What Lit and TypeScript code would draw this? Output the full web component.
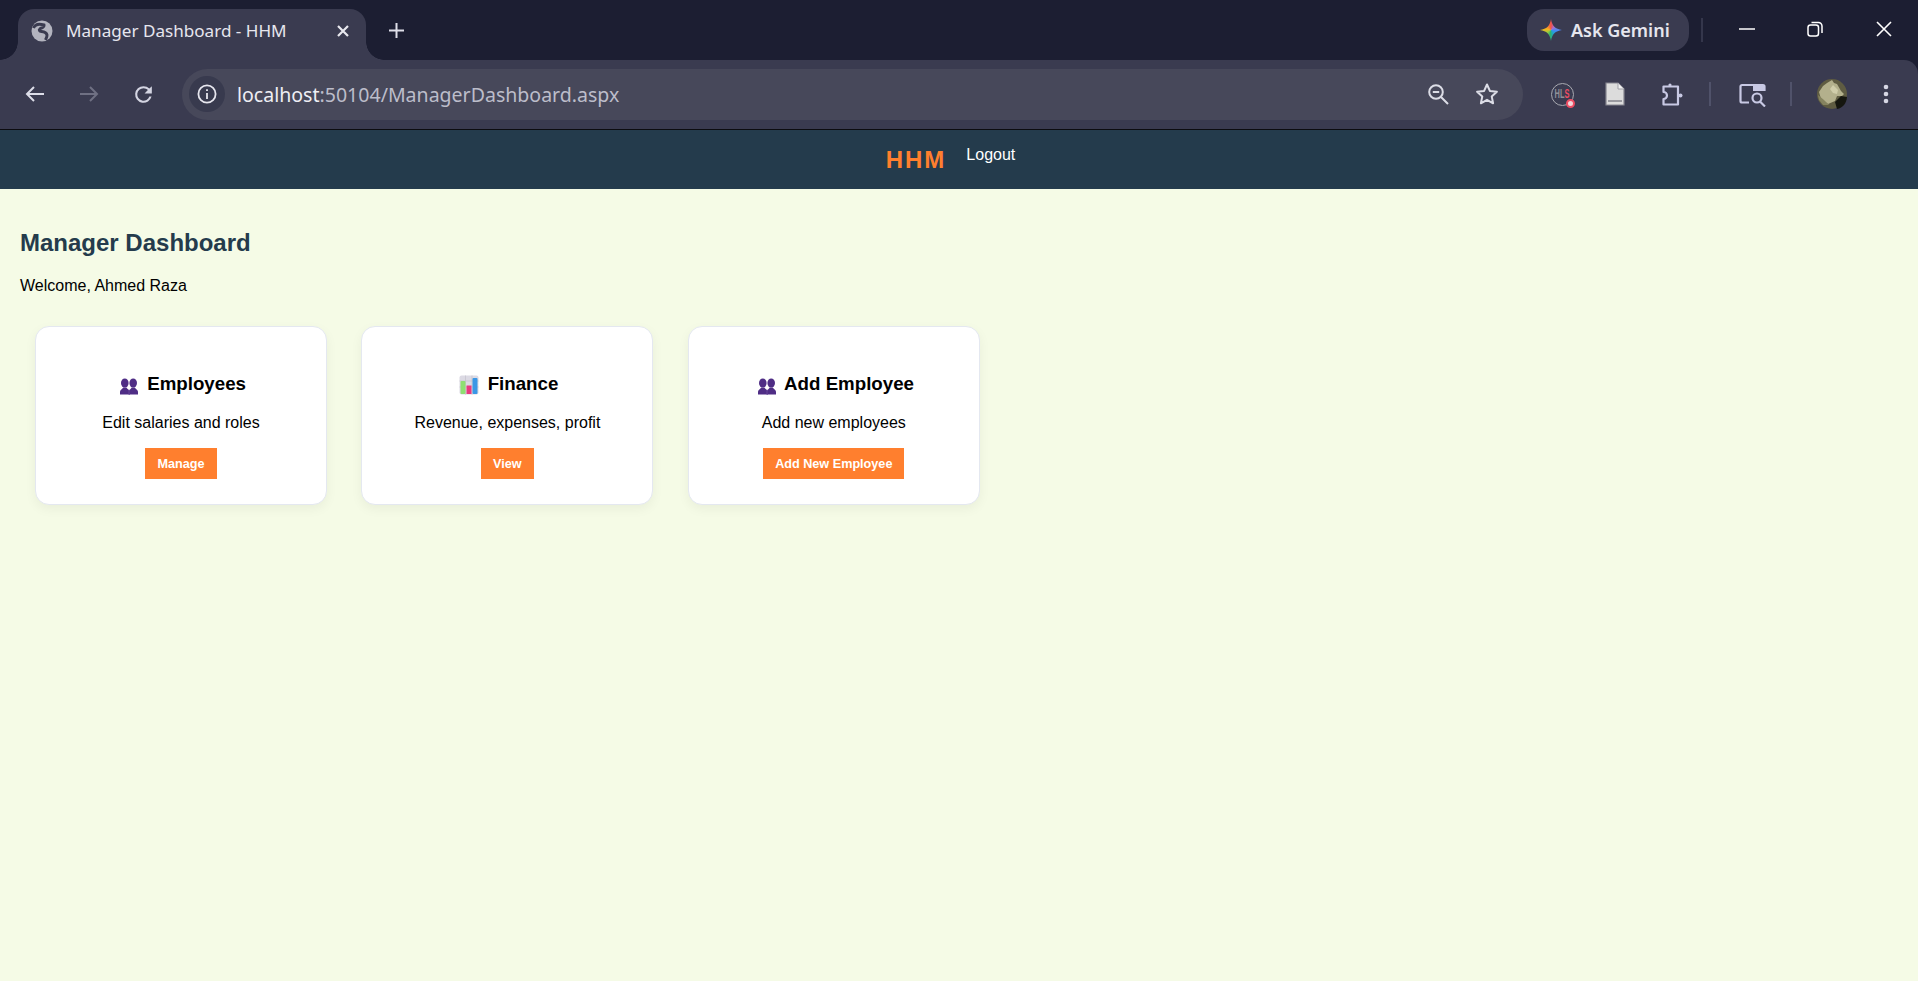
// app.ts — browser chrome plus the HHM manager dashboard page
import { LitElement, html, css, svg } from 'lit';
import { customElement } from 'lit/decorators.js';

const people = svg`
  <g fill="#4f2d85">
    <ellipse cx="8.800" cy="8" rx="3.800" ry="4.500"></ellipse>
    <path d="M4 19.500v-2.800c0-2 2.600-2.500 3.200-4.200h3.200c.6 1.700 3.200 2.200 3.600 4.200v2.800z"></path>
    <ellipse cx="17.200" cy="8" rx="3.800" ry="4.500"></ellipse>
    <path d="M12.600 19.500v-2.800c0-2 2.800-2.500 3-4.200h3.200c.6 1.700 3.200 2.200 3.200 4.200v2.800z"></path>
  </g>
  <path d="M13 14.500v5" stroke="#7a5aa8" stroke-width=".6"></path>`;

const chart = svg`
  <rect x="3.500" y="0.500" width="19" height="19" rx="2" fill="#dcdae4"></rect>
  <path d="M3.500 6h19M3.500 12h19M9.500 .5v19M16 .5v19" stroke="#c3c1cc" stroke-width=".7"></path>
  <rect x="4.500" y="6" width="5" height="13" rx="1" fill="#8fdf72"></rect>
  <rect x="10.500" y="10.500" width="5" height="8.500" fill="#e9397f"></rect>
  <rect x="16.500" y="3" width="5" height="16" rx="1" fill="#3a97e6"></rect>`;

const cards = [
  { icon: people, title: 'Employees', text: 'Edit salaries and roles', action: 'Manage' },
  { icon: chart, title: 'Finance', text: 'Revenue, expenses, profit', action: 'View' },
  { icon: people, title: 'Add Employee', text: 'Add new employees', action: 'Add New Employee' },
];

@customElement('app-root')
export class AppRoot extends LitElement {
  static styles = css`
    :host {
      display: flex;
      flex-direction: column;
      height: 100vh;
      background: #1c1e32;
      font-family: 'Liberation Sans', Arial, sans-serif;
      overflow: hidden;
    }
    svg { display: block; }

    /* ── window strip ─────────────────────────── */
    .strip {
      display: flex;
      flex: none;
      height: 60px;
      font-family: 'Noto Sans', sans-serif;
    }
    .tab {
      position: relative;
      display: flex;
      align-items: center;
      box-sizing: border-box;
      width: 348px;
      height: 51px;
      margin: 9px 0 0 18px;
      padding: 0 16px 8px 13px;
      background: #3a3b50;
      border-radius: 16px 16px 0 0;
      color: #e6e6ee;
      font-size: 17.100px;
    }
    .tab::before,
    .tab::after {
      content: '';
      position: absolute;
      bottom: 0;
      width: 18px;
      height: 18px;
    }
    .tab::before {
      left: -18px;
      background: radial-gradient(circle at 0 0, transparent 17.500px, #3a3b50 18px);
    }
    .tab::after {
      right: -18px;
      background: radial-gradient(circle at 100% 0, transparent 17.500px, #3a3b50 18px);
    }
    .tab-title { margin-left: 13px; flex: 1; white-space: nowrap; }
    .new-tab { width: 40px; margin: 12px 0 0 10px; display: flex; justify-content: center; padding-top: 10px; box-sizing: border-box; }
    .spacer { flex: 1; }
    .gemini {
      display: flex;
      align-items: center;
      box-sizing: border-box;
      width: 162px;
      height: 42px;
      margin-top: 9px;
      padding-left: 13px;
      background: #3a3b50;
      border-radius: 17px;
      color: #e6e6ee;
      font-size: 18px;
      font-weight: 600;
    }
    .spark {
      width: 22px;
      height: 22px;
      margin-right: 9px;
      background: conic-gradient(#f0514a 0deg, #a56fd0 45deg, #3f8cf5 100deg, #1fa5c8 150deg, #2fb26a 190deg, #9ccb3f 240deg, #f6b51e 280deg, #f0514a 360deg);
      clip-path: path('M11 0C11.800 6.500 15.500 10.200 22 11C15.500 11.800 11.800 15.500 11 22C10.200 15.500 6.500 11.800 0 11C6.500 10.200 10.200 6.500 11 0Z');
    }
    .strip-sep { width: 2px; height: 24px; margin: 18px 0 0 12px; background: #34364b; }
    .win { display: flex; margin-top: 21px; }
    .win-btn { display: flex; justify-content: center; width: 68px; }
    .win-btn svg { height: 16px; width: 16px; }
    .win-first { margin-left: 10px; }
    .win-last { margin-left: 1px; }

    /* ── toolbar ──────────────────────────────── */
    .toolbar {
      display: flex;
      align-items: center;
      flex: none;
      box-sizing: border-box;
      height: 70px;
      padding: 0 0 1px 8px;
      background: #3a3b50;
      border-bottom: 1px solid #0c0c10;
      border-top-right-radius: 14px;
    }
    .nav-btn { display: flex; justify-content: center; width: 54px; }
    .omnibox {
      display: flex;
      align-items: center;
      box-sizing: border-box;
      width: 1341px;
      height: 51px;
      margin-left: 12px;
      padding: 0 18px 0 7px;
      background: #47485a;
      border-radius: 26px;
      font-family: 'Noto Sans', sans-serif;
      font-size: 19.550px;
      color: #bcbdca;
    }
    .chip {
      display: flex;
      align-items: center;
      justify-content: center;
      flex: none;
      width: 36px;
      height: 36px;
      border-radius: 50%;
      background: #383a4e;
    }
    .url { flex: 1; margin-left: 12px; white-space: nowrap; }
    .url b { font-weight: 400; color: #eeeef4; }
    .omni-btn { display: flex; justify-content: center; width: 36px; }
    .omni-btn + .omni-btn { margin-left: 13px; }
    .tool { display: flex; justify-content: center; flex: none; width: 52px; }
    .hls { margin-left: 13px; position: relative; }
    .doc { margin-left: 1px; }
    .puzzle { margin-left: 4px; }
    .tool-sep { flex: none; width: 2px; height: 24px; margin-left: 12px; background: #50526a; }
    .lens { margin-left: 15px; }
    .face { margin-left: 14px; }
    .menu { margin-left: 2px; }
    .hls-ring {
      position: relative;
      display: flex;
      align-items: center;
      justify-content: center;
      box-sizing: border-box;
      width: 23px;
      height: 23px;
      border: 1.500px solid #a8a9b0;
      border-radius: 50%;
      color: #8f9098;
    }
    .hls-text {
      display: inline-block;
      font: bold 12px/1 'Liberation Sans', sans-serif;
      transform: scaleX(.62);
    }
    .hls-text i { font-style: normal; color: #ee4d63; }
    .hls-ring::after {
      content: '';
      position: absolute;
      right: -2px;
      bottom: -3px;
      width: 5px;
      height: 5px;
      border: 2.500px solid #ee4d63;
      border-radius: 50%;
      background: #f3d6da;
    }

    /* ── page ─────────────────────────────────── */
    .bar {
      display: flex;
      align-items: center;
      justify-content: center;
      flex: none;
      height: 59px;
      background: #243b4c;
    }
    .brand {
      font-size: 24px;
      font-weight: 700;
      letter-spacing: 2px;
      color: #ff7f2e;
    }
    .logout {
      margin: 0 0 10px 4px;
      padding: 0 17px 0 16px;
      color: #fff;
      font-size: 16px;
    }
    main { flex: 1; padding: 20px; background: #f5fbe6; color: #000; font-size: 16px; }
    h2 {
      margin: 19.920px 0;
      font-size: 24px;
      color: #243b4c;
    }
    .welcome { margin: 16px 0; }
    .cards { display: flex; gap: 34.400px; margin: 31px 0 0 15px; }
    .card {
      box-sizing: border-box;
      width: 292px;
      height: 179px;
      padding: 26px 24px 24px;
      background: #fff;
      border: 1px solid #e4e8f0;
      border-radius: 14px;
      box-shadow: 0 4px 12px rgba(0, 0, 0, 0.05);
      text-align: center;
    }
    h3 {
      margin: 18.720px 0 19.700px;
      font-size: 18.720px;
      line-height: 23px;
      white-space: nowrap;
    }
    h3 svg {
      display: inline-block;
      vertical-align: -5px;
    }
    .card p { margin: 0 0 16px; line-height: 18px; }
    button {
      display: inline-block;
      height: 31px;
      padding: 0 12px;
      border: 0;
      background: #ff7f2e;
      color: #fff;
      font: bold 12.650px 'Liberation Sans', Arial, sans-serif;
    }
  `;

  render() {
    return html`
      <div class="strip">
        <div class="tab">
          <svg width="22" height="22" viewBox="0 0 22 22">
            <circle cx="11" cy="11" r="10.500" fill="#b3b4bf"></circle>
            <path d="M2.500 8C4 4.500 8 3.500 13 5c.5 2-2.500 2.800-4 3.800-1.500 1.200-.5 2.500 1.500 2.700 3.500.3 5 1.200 5.500 3.500.2 1.500-.5 3-1.500 5" fill="none" stroke="#3a3b50" stroke-width="3"></path>
          </svg>
          <span class="tab-title">Manager Dashboard - HHM</span>
          <svg width="14" height="14" viewBox="0 0 14 14" stroke="#e8e8ef" stroke-width="2.200"><path d="M2 2l10 10M12 2 2 12"></path></svg>
        </div>
        <div class="new-tab">
          <svg width="17" height="17" viewBox="0 0 17 17" stroke="#dedee8" stroke-width="2"><path d="M8.500 1v15M1 8.500h15"></path></svg>
        </div>
        <div class="spacer"></div>
        <div class="gemini"><span class="spark"></span>Ask Gemini</div>
        <div class="strip-sep"></div>
        <div class="win">
          <div class="win-btn win-first">
            <svg viewBox="0 0 16 16" stroke="#fff" stroke-width="1.500"><path d="M0 8h16"></path></svg>
          </div>
          <div class="win-btn">
            <svg viewBox="0 0 16 16" fill="none" stroke="#fff" stroke-width="1.500"><rect x="1" y="4" width="10.500" height="11" rx="2.500"></rect><path d="M4.500 1.500h7a3.500 3.500 0 0 1 3.500 3.500v7"></path></svg>
          </div>
          <div class="win-btn win-last">
            <svg viewBox="0 0 16 16" stroke="#fff" stroke-width="1.600"><path d="M1 1l14 14M15 1 1 15"></path></svg>
          </div>
        </div>
      </div>

      <div class="toolbar">
        <div class="nav-btn">
          <svg width="24" height="24" viewBox="0 0 24 24" fill="none" stroke="#dcdde8" stroke-width="2"><path d="M21 12H4M11 5l-7 7 7 7"></path></svg>
        </div>
        <div class="nav-btn">
          <svg width="24" height="24" viewBox="0 0 24 24" fill="none" stroke="#6f7083" stroke-width="2"><path d="M3 12h17M13 5l7 7-7 7"></path></svg>
        </div>
        <div class="nav-btn">
          <svg width="25" height="25" viewBox="0 0 24 24" fill="#d4d5e2"><path d="M17.650 6.350A7.950 7.950 0 0 0 12 4a8 8 0 1 0 7.730 10h-2.080A6 6 0 1 1 12 6c1.660 0 3.140.690 4.220 1.780L13 11h7V4l-2.350 2.350z"></path></svg>
        </div>
        <div class="omnibox">
          <div class="chip">
            <svg width="22" height="22" viewBox="0 0 22 22" fill="none" stroke="#e6e6ee" stroke-width="1.800">
              <circle cx="11" cy="11" r="8.600"></circle>
              <path d="M11 10v6M11 6.200v1.800"></path>
            </svg>
          </div>
          <span class="url"><b>localhost</b>:50104/ManagerDashboard.aspx</span>
          <div class="omni-btn">
            <svg width="24" height="24" viewBox="0 0 24 24" fill="none" stroke="#dcdde6" stroke-width="2"><circle cx="10" cy="10" r="6.800"></circle><path d="M6.800 10h6.400M15 15l7 7"></path></svg>
          </div>
          <div class="omni-btn">
            <svg width="24" height="24" viewBox="0 0 24 24" fill="none" stroke="#dcdde6" stroke-width="2" stroke-linejoin="round"><path d="M12 2.500l2.900 6.400 7 .8-5.200 4.700 1.400 6.900-6.100-3.500-6.100 3.500 1.400-6.900L2.100 9.700l7-.8z"></path></svg>
          </div>
        </div>
        <div class="tool hls"><div class="hls-ring"><span class="hls-text">HL<i>S</i></span></div></div>
        <div class="tool doc">
          <svg width="20" height="24" viewBox="0 0 20 24">
            <path d="M1 1h12l6 6v16H1z" fill="#dcdcdc" stroke="#85858f" stroke-width="1.200"></path>
            <path d="M13 1v6h6" fill="#f2f2f2" stroke="#a0a0a8"></path>
            <rect x="3" y="18" width="14" height="2" fill="#9a9aa0"></rect>
          </svg>
        </div>
        <div class="tool puzzle">
          <svg width="25" height="25" viewBox="0 0 25 25" fill="none" stroke="#c8c9e4" stroke-width="2.200" stroke-linejoin="round">
            <path d="M4.500 4.500h14.500v18H4.500v-5.500a3.500 3.500 0 0 0 0-7z"></path>
            <circle cx="11" cy="3" r="1.600" fill="#c8c9e4" stroke="none"></circle>
            <circle cx="21.500" cy="13.500" r="2" fill="#c8c9e4" stroke="none"></circle>
          </svg>
        </div>
        <div class="tool-sep"></div>
        <div class="tool lens">
          <svg width="27" height="25" viewBox="0 0 27 25" fill="none" stroke="#c8c9e4" stroke-width="2.200">
            <path d="M10 20.500H3a1.500 1.500 0 0 1-1.500-1.500V4.500A1.500 1.500 0 0 1 3 3h21a1.500 1.500 0 0 1 1.500 1.500V9"></path>
            <path d="M14 3h11.500v6H14z" fill="#c8c9e4" stroke="none"></path>
            <circle cx="18" cy="16" r="4.500"></circle>
            <path d="M21 19.500l5 5"></path>
          </svg>
        </div>
        <div class="tool-sep"></div>
        <div class="tool face">
          <svg width="30" height="30" viewBox="0 0 30 30">
            <circle cx="15" cy="15" r="15" fill="#5f5c42"></circle>
            <path d="M20 30c6-1 9.500-6 10-12l-6-1-6 6z" fill="#15160f"></path>
            <path d="M10 4l5-3 2 3 3 1 4 7 3 3-2 2-5 0-2 5-7 3-7-5-2-7 4-6z" fill="#b3b08c"></path>
            <path d="M16 6l5 5-1 4-4-1-3-4z" fill="#d0cdaa"></path>
            <path d="M1 16l6 5 5 5-6 0-4-5z" fill="#85835f"></path>
          </svg>
        </div>
        <div class="tool menu">
          <svg width="6" height="20" viewBox="0 0 6 20" fill="#d6d7e4"><circle cx="3" cy="3" r="2.300"></circle><circle cx="3" cy="10" r="2.300"></circle><circle cx="3" cy="17" r="2.300"></circle></svg>
        </div>
      </div>

      <header class="bar">
        <span class="brand">HHM</span>
        <span class="logout">Logout</span>
      </header>

      <main>
        <h2>Manager Dashboard</h2>
        <p class="welcome">Welcome, Ahmed Raza</p>
        <div class="cards">
          ${cards.map((c) => html`
            <section class="card">
              <h3><svg width="26" height="20" viewBox="0 0 26 20">${c.icon}</svg> ${c.title}</h3>
              <p>${c.text}</p>
              <button>${c.action}</button>
            </section>
          `)}
        </div>
      </main>
    `;
  }
}
